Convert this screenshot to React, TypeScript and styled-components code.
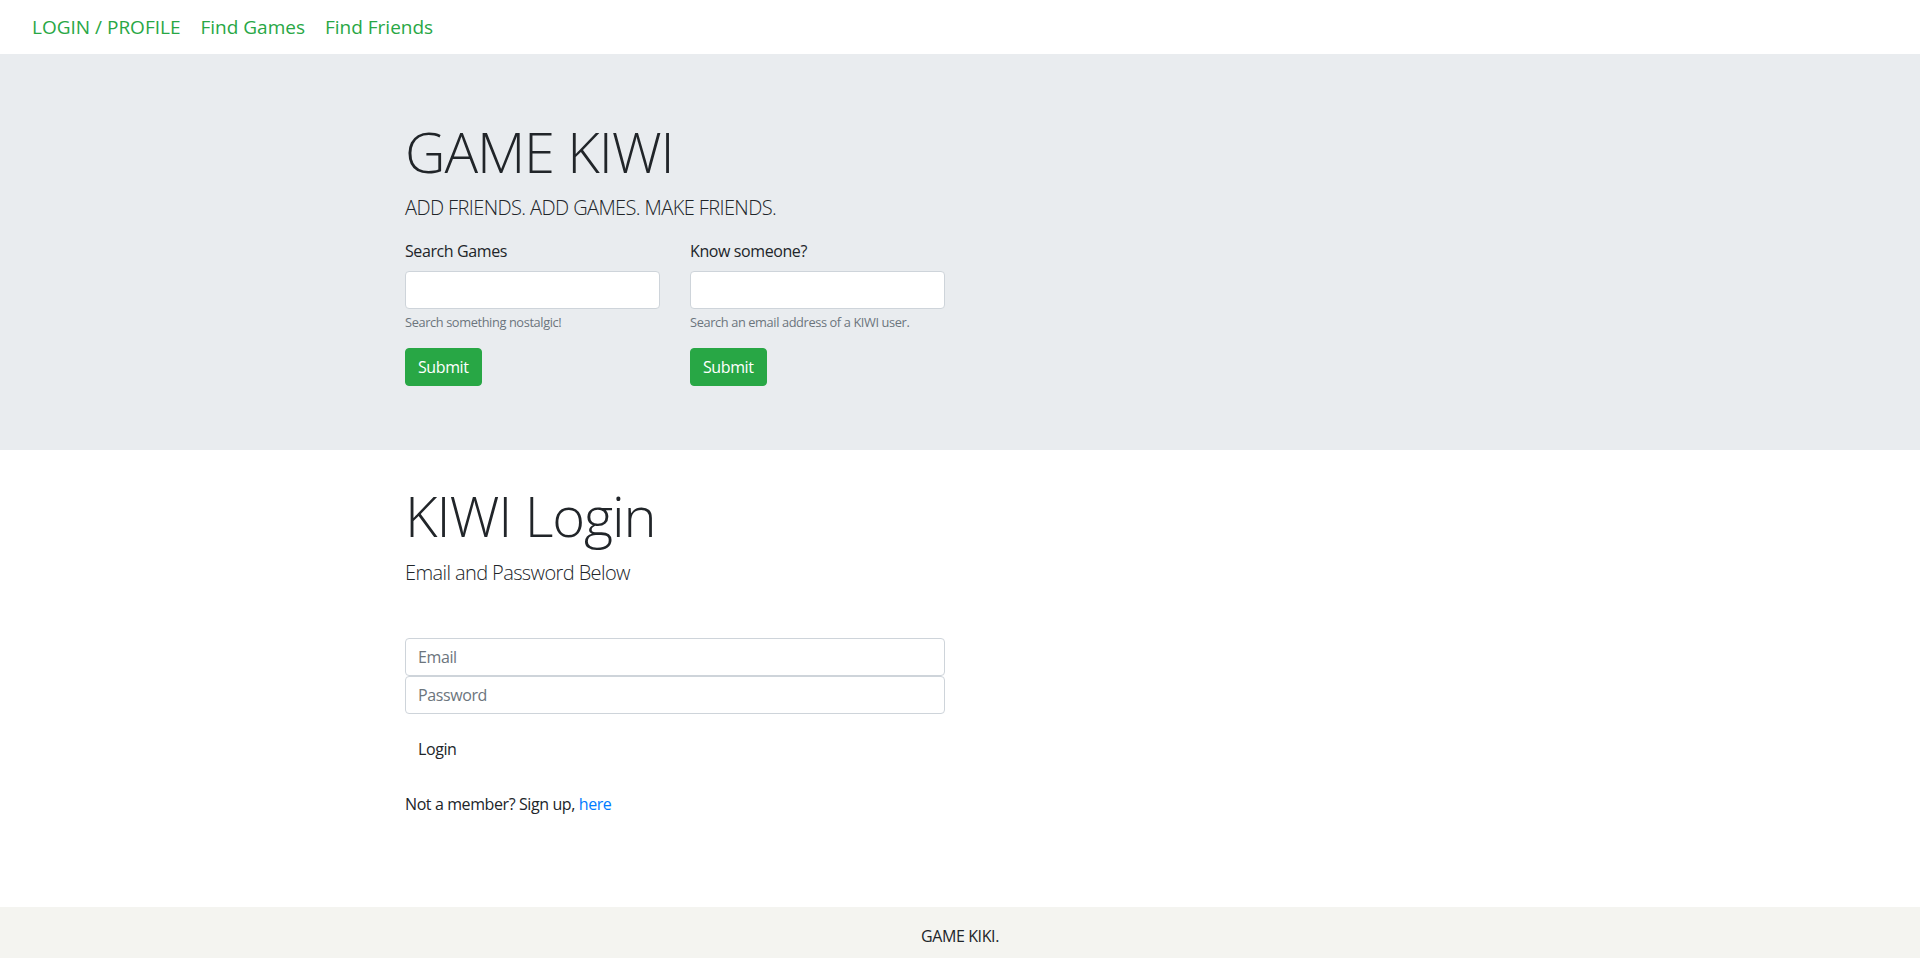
import React from "react";
import styled, { createGlobalStyle } from "styled-components";

const GlobalStyle = createGlobalStyle`
  html, body {
    margin: 0;
    padding: 0;
  }
  body {
    font-family: "Open Sans", "Noto Sans", "Liberation Sans", sans-serif;
    font-size: 16px;
    line-height: 1.5;
    letter-spacing: -0.025em;
    color: #212529;
    background: #ffffff;
  }
  *, *::before, *::after { box-sizing: border-box; }
`;

const Page = styled.div`
  min-height: 100vh;
  display: flex;
  flex-direction: column;
`;

const NavBar = styled.nav`
  height: 54px;
  display: flex;
  align-items: center;
  padding-left: 22px;
  background: #ffffff;
`;

const NavLink = styled.a`
  color: #28a745;
  font-size: 19px;
  letter-spacing: normal;
  padding: 0 10px;
  text-decoration: none;
  cursor: pointer;
`;

const Jumbotron = styled.header`
  background: #e9ecef;
  padding: 64px 0;
  margin-bottom: 32px;
`;

const Container = styled.div`
  width: 1140px;
  margin: 0 auto;
  padding: 0 15px;
`;

const Main = styled.main`
  flex: 1;
`;

const Display = styled.h1`
  font-size: 56px;
  font-weight: 300;
  line-height: 1.2;
  letter-spacing: -0.02em;
  margin: 0 0 8px;
`;

const Lead = styled.p<{ $upper?: boolean }>`
  font-size: 20px;
  font-weight: 300;
  letter-spacing: -0.03em;
  margin: 0 0 16px;
  text-transform: ${(p) => (p.$upper ? "uppercase" : "none")};
`;

const SearchRow = styled.div`
  display: grid;
  grid-template-columns: 255px 255px;
  column-gap: 30px;
`;

const SearchForm = styled.form`
  display: flex;
  flex-direction: column;
  align-items: flex-start;
`;

const FieldGroup = styled.div`
  width: 100%;
  margin-bottom: 16px;
`;

const Label = styled.label`
  display: block;
  margin-bottom: 8px;
`;

const TextInput = styled.input`
  display: block;
  width: 100%;
  height: 38px;
  padding: 6px 12px;
  font-family: inherit;
  font-size: 16px;
  line-height: 1.5;
  letter-spacing: -0.025em;
  color: #495057;
  background: #ffffff;
  border: 1px solid #ced4da;
  border-radius: 4px;
  outline: none;
  &::placeholder {
    color: #6c757d;
  }
`;

const HelpText = styled.small`
  display: block;
  margin-top: 4px;
  font-size: 12.8px;
  letter-spacing: -0.03em;
  color: #6c757d;
`;

const Button = styled.button<{ $variant?: "success" | "plain" }>`
  display: inline-block;
  font-family: inherit;
  font-size: 16px;
  line-height: 1.5;
  letter-spacing: -0.025em;
  padding: 6px 12px;
  border-radius: 4px;
  cursor: pointer;
  border: 1px solid
    ${(p) => (p.$variant === "success" ? "#28a745" : "transparent")};
  background: ${(p) => (p.$variant === "success" ? "#28a745" : "transparent")};
  color: ${(p) => (p.$variant === "success" ? "#ffffff" : "#212529")};
`;

const LoginForm = styled.form`
  width: 540px;
  margin-top: 50px;
  display: flex;
  flex-direction: column;
  align-items: flex-start;
`;

const StackedInputs = styled.div`
  width: 100%;
  display: flex;
  flex-direction: column;
  margin-bottom: 16px;
`;

const SignupText = styled.p`
  margin: 24px 0 0;
`;

const Link = styled.a`
  color: #007bff;
  text-decoration: none;
`;

const Footer = styled.footer`
  background: #f4f4f0;
  height: 51px;
  padding-top: 17px;
  text-align: center;
  font-size: 16px;
  line-height: 24px;
`;

export default function App() {
  return (
    <>
      <GlobalStyle />
      <Page>
        <NavBar>
          <NavLink>LOGIN / PROFILE</NavLink>
          <NavLink>Find Games</NavLink>
          <NavLink>Find Friends</NavLink>
        </NavBar>
        <Main>
          <Jumbotron>
            <Container>
              <Display>GAME KIWI</Display>
              <Lead $upper>Add friends. Add games. Make friends.</Lead>
              <SearchRow>
                <SearchForm onSubmit={(e) => e.preventDefault()}>
                  <FieldGroup>
                    <Label htmlFor="search-games">Search Games</Label>
                    <TextInput id="search-games" type="text" />
                    <HelpText>Search something nostalgic!</HelpText>
                  </FieldGroup>
                  <Button $variant="success" type="submit">
                    Submit
                  </Button>
                </SearchForm>
                <SearchForm onSubmit={(e) => e.preventDefault()}>
                  <FieldGroup>
                    <Label htmlFor="know-someone">Know someone?</Label>
                    <TextInput id="know-someone" type="email" />
                    <HelpText>Search an email address of a KIWI user.</HelpText>
                  </FieldGroup>
                  <Button $variant="success" type="submit">
                    Submit
                  </Button>
                </SearchForm>
              </SearchRow>
            </Container>
          </Jumbotron>
          <Container>
            <Display>KIWI Login</Display>
            <Lead>Email and Password Below</Lead>
            <LoginForm onSubmit={(e) => e.preventDefault()}>
              <StackedInputs>
                <TextInput type="email" placeholder="Email" />
                <TextInput type="password" placeholder="Password" />
              </StackedInputs>
              <Button $variant="plain" type="submit">
                Login
              </Button>
            </LoginForm>
            <SignupText>
              Not a member? Sign up, <Link href="#">here</Link>
            </SignupText>
          </Container>
        </Main>
        <Footer>GAME KIKI.</Footer>
      </Page>
    </>
  );
}
